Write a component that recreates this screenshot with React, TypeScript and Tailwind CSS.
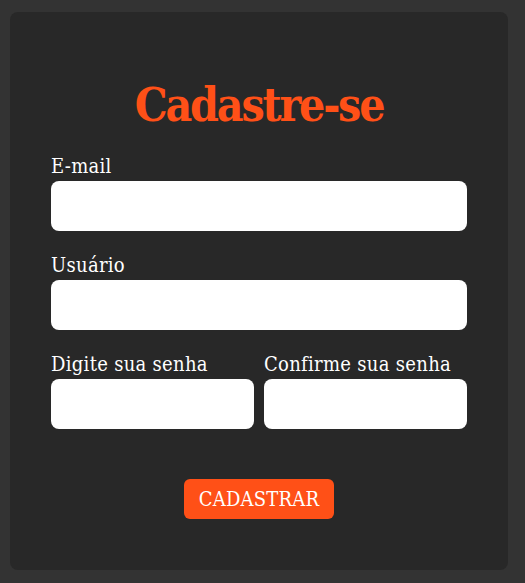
import React, { useState } from 'react';

interface FormState {
    email: string;
    usuario: string;
    senha: string;
    confirmacao: string;
}

const fontStack = { fontFamily: '"Roboto Slab", "DejaVu Serif", serif' };

const Cadastro: React.FC = () => {
    const [form, setForm] = useState<FormState>({ email: '', usuario: '', senha: '', confirmacao: '' });

    const update = (field: keyof FormState) => (e: React.ChangeEvent<HTMLInputElement>) =>
        setForm({ ...form, [field]: e.target.value });

    return (
        <div className="min-h-screen w-full bg-[#333333] pt-[12px] pl-[10px] font-stretch-condensed" style={fontStack}>
            <form
                onSubmit={(e) => e.preventDefault()}
                className="w-[498px] h-[558px] bg-[#282828] rounded-[8px] px-[41px] pt-[65px] flex flex-col"
            >
                <h1 className="text-[46px] leading-[56px] font-bold tracking-[-2.2px] text-[#ff5017] text-center mb-[23px]">
                    Cadastre-se
                </h1>

                <div className="flex flex-col gap-[24px] tracking-[0.3px]">
                    <label className="flex flex-col">
                        <span className="text-white text-[20px] leading-[21px] mb-[4px]">E-mail</span>
                        <input
                            type="email"
                            value={form.email}
                            onChange={update('email')}
                            className="h-[50px] w-full bg-white rounded-[8px] px-3 outline-none"
                        />
                    </label>

                    <label className="flex flex-col">
                        <span className="text-white text-[20px] leading-[21px] mb-[4px]">Usuário</span>
                        <input
                            type="text"
                            value={form.usuario}
                            onChange={update('usuario')}
                            className="h-[50px] w-full bg-white rounded-[8px] px-3 outline-none"
                        />
                    </label>

                    <div className="flex gap-[10px]">
                        <label className="flex flex-col flex-1">
                            <span className="text-white text-[20px] leading-[21px] mb-[4px] whitespace-nowrap">Digite sua senha</span>
                            <input
                                type="password"
                                value={form.senha}
                                onChange={update('senha')}
                                className="h-[50px] w-full bg-white rounded-[8px] px-3 outline-none"
                            />
                        </label>
                        <label className="flex flex-col flex-1">
                            <span className="text-white text-[20px] leading-[21px] mb-[4px] whitespace-nowrap">Confirme sua senha</span>
                            <input
                                type="password"
                                value={form.confirmacao}
                                onChange={update('confirmacao')}
                                className="h-[50px] w-full bg-white rounded-[8px] px-3 outline-none"
                            />
                        </label>
                    </div>
                </div>

                <div className="flex justify-center mt-[50px]">
                    <button
                        type="submit"
                        className="h-[40px] px-[15px] bg-[#ff5017] text-white text-[20px] tracking-[0.2px] rounded-[6px]"
                    >
                        CADASTRAR
                    </button>
                </div>
            </form>
        </div>
    );
};

export default Cadastro;
